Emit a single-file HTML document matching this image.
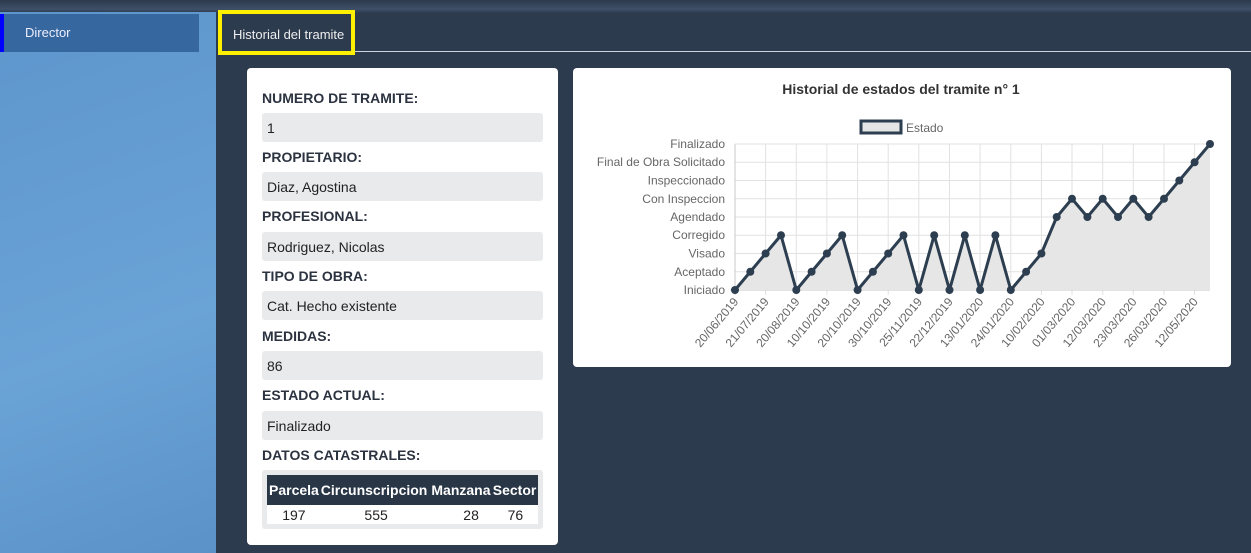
<!DOCTYPE html>
<html><head><meta charset="utf-8"><style>
*{margin:0;padding:0;box-sizing:border-box}
body{width:1251px;height:553px;overflow:hidden;background:#2d3b4e;font-family:"Liberation Sans",sans-serif;position:relative}
.top{position:absolute;left:0;top:0;width:1251px;height:13px;background:linear-gradient(#2b394b,#3e5068 70%,#2d3b4e)}
.side{position:absolute;left:0;top:12px;width:216px;height:541px;background:linear-gradient(160deg,#5d96cc,#6aa3d6 60%,#5b93c9)}
.dir{position:absolute;left:0;top:14px;width:199px;height:38px;background:#36689f;border-left:4px solid #0000ff;color:#eef;font-size:13px;padding:11px 0 0 21px}
.tab{position:absolute;left:218px;top:10px;width:137px;height:45px;border:4px solid #ffef00;color:#eee;font-size:13px;padding:13px 0 0 11px;background:#2d3b4e}
.tline{position:absolute;left:355px;top:51px;width:896px;height:1px;background:#cfd4da}
.card{position:absolute;background:#fff;border-radius:4px}
.lab{position:absolute;left:15px;font-weight:bold;font-size:14px;color:#2c3340}
.inp{position:absolute;left:15px;width:281px;height:29px;background:#e9eaec;border-radius:3px;font-size:14px;color:#222;padding:7px 0 0 5px}
table{border-collapse:collapse;font-size:14px}
</style></head><body>
<div class="top"></div>
<div class="side"></div>
<div class="dir">Director</div>
<div class="tab">Historial del tramite</div>
<div class="tline"></div>
<div class="card" style="left:247px;top:68px;width:311px;height:477px">
<div class="lab" style="top:22px">NUMERO DE TRAMITE:</div>
<div class="inp" style="top:45px">1</div>
<div class="lab" style="top:81px">PROPIETARIO:</div>
<div class="inp" style="top:104px">Diaz, Agostina</div>
<div class="lab" style="top:140px">PROFESIONAL:</div>
<div class="inp" style="top:164px">Rodriguez, Nicolas</div>
<div class="lab" style="top:200px">TIPO DE OBRA:</div>
<div class="inp" style="top:223px">Cat. Hecho existente</div>
<div class="lab" style="top:260px">MEDIDAS:</div>
<div class="inp" style="top:283px">86</div>
<div class="lab" style="top:319px">ESTADO ACTUAL:</div>
<div class="inp" style="top:343px">Finalizado</div>
<div class="lab" style="top:379px">DATOS CATASTRALES:</div>
<div style="position:absolute;left:15px;top:402px;width:281px;height:59px;background:#e9eaec;border-radius:3px;padding:5px">
<table style="width:271px"><tr style="background:#293646;color:#fff;font-weight:bold;height:30px"><td style="padding-left:2px">Parcela</td><td>Circunscripcion</td><td>Manzana</td><td>Sector</td></tr>
<tr style="background:#fff;color:#222;height:19px;text-align:center"><td>197</td><td>555</td><td style="padding-left:18px">28</td><td>76</td></tr></table></div>
</div>
<div class="card" style="left:573px;top:68px;width:658px;height:299px"></div>
<svg style="position:absolute;left:0;top:0" width="1251" height="553" font-family="Liberation Sans,sans-serif">
<text x="901" y="94" text-anchor="middle" font-size="14" font-weight="bold" fill="#333">Historial de estados del tramite n° 1</text>
<rect x="861" y="121" width="40" height="12" fill="#e5e5e5" stroke="#2c3e50" stroke-width="3"/>
<text x="906" y="132" font-size="12" fill="#666">Estado</text>
<g stroke="#e2e2e2" stroke-width="1">
<line x1="735" y1="144" x2="1210" y2="144"/><line x1="735" y1="162.25" x2="1210" y2="162.25"/><line x1="735" y1="180.5" x2="1210" y2="180.5"/><line x1="735" y1="198.75" x2="1210" y2="198.75"/><line x1="735" y1="217" x2="1210" y2="217"/><line x1="735" y1="235.25" x2="1210" y2="235.25"/><line x1="735" y1="253.5" x2="1210" y2="253.5"/><line x1="735" y1="271.75" x2="1210" y2="271.75"/>
<line x1="765.6" y1="144" x2="765.6" y2="295"/><line x1="796.3" y1="144" x2="796.3" y2="295"/><line x1="826.9" y1="144" x2="826.9" y2="295"/><line x1="857.6" y1="144" x2="857.6" y2="295"/><line x1="888.2" y1="144" x2="888.2" y2="295"/><line x1="918.8" y1="144" x2="918.8" y2="295"/><line x1="949.5" y1="144" x2="949.5" y2="295"/><line x1="980.1" y1="144" x2="980.1" y2="295"/><line x1="1010.8" y1="144" x2="1010.8" y2="295"/><line x1="1041.4" y1="144" x2="1041.4" y2="295"/><line x1="1072" y1="144" x2="1072" y2="295"/><line x1="1102.7" y1="144" x2="1102.7" y2="295"/><line x1="1133.3" y1="144" x2="1133.3" y2="295"/><line x1="1164" y1="144" x2="1164" y2="295"/><line x1="1194.6" y1="144" x2="1194.6" y2="295"/>
</g>
<g stroke="#c8c8c8"><line x1="735" y1="144" x2="735" y2="295"/><line x1="730" y1="290" x2="1210" y2="290"/></g>
<polygon fill="#e6e6e6" points="735,290 750.3,271.75 765.6,253.5 781,235.25 796.3,290 811.6,271.75 826.9,253.5 842.2,235.25 857.6,290 872.9,271.75 888.2,253.5 903.5,235.25 918.8,290 934.2,235.25 949.5,290 964.8,235.25 980.1,290 995.4,235.25 1010.8,290 1026.1,271.75 1041.4,253.5 1056.7,217 1072,198.75 1087.4,217 1102.7,198.75 1118,217 1133.3,198.75 1148.6,217 1164,198.75 1179.3,180.5 1194.6,162.25 1210,144 1210,290"/>
<polyline fill="none" stroke="#2c3e50" stroke-width="3" stroke-linejoin="round" points="735,290 750.3,271.75 765.6,253.5 781,235.25 796.3,290 811.6,271.75 826.9,253.5 842.2,235.25 857.6,290 872.9,271.75 888.2,253.5 903.5,235.25 918.8,290 934.2,235.25 949.5,290 964.8,235.25 980.1,290 995.4,235.25 1010.8,290 1026.1,271.75 1041.4,253.5 1056.7,217 1072,198.75 1087.4,217 1102.7,198.75 1118,217 1133.3,198.75 1148.6,217 1164,198.75 1179.3,180.5 1194.6,162.25 1210,144"/>
<g fill="#2c3e50">
<circle cx="735" cy="290" r="4"/><circle cx="750.3" cy="271.75" r="4"/><circle cx="765.6" cy="253.5" r="4"/><circle cx="781" cy="235.25" r="4"/><circle cx="796.3" cy="290" r="4"/><circle cx="811.6" cy="271.75" r="4"/><circle cx="826.9" cy="253.5" r="4"/><circle cx="842.2" cy="235.25" r="4"/><circle cx="857.6" cy="290" r="4"/><circle cx="872.9" cy="271.75" r="4"/><circle cx="888.2" cy="253.5" r="4"/><circle cx="903.5" cy="235.25" r="4"/><circle cx="918.8" cy="290" r="4"/><circle cx="934.2" cy="235.25" r="4"/><circle cx="949.5" cy="290" r="4"/><circle cx="964.8" cy="235.25" r="4"/><circle cx="980.1" cy="290" r="4"/><circle cx="995.4" cy="235.25" r="4"/><circle cx="1010.8" cy="290" r="4"/><circle cx="1026.1" cy="271.75" r="4"/><circle cx="1041.4" cy="253.5" r="4"/><circle cx="1056.7" cy="217" r="4"/><circle cx="1072" cy="198.75" r="4"/><circle cx="1087.4" cy="217" r="4"/><circle cx="1102.7" cy="198.75" r="4"/><circle cx="1118" cy="217" r="4"/><circle cx="1133.3" cy="198.75" r="4"/><circle cx="1148.6" cy="217" r="4"/><circle cx="1164" cy="198.75" r="4"/><circle cx="1179.3" cy="180.5" r="4"/><circle cx="1194.6" cy="162.25" r="4"/><circle cx="1210" cy="144" r="4"/>
</g>
<g font-size="12" fill="#666" text-anchor="end">
<text x="725" y="148">Finalizado</text><text x="725" y="166">Final de Obra Solicitado</text><text x="725" y="184.5">Inspeccionado</text><text x="725" y="203">Con Inspeccion</text><text x="725" y="221">Agendado</text><text x="725" y="239">Corregido</text><text x="725" y="257.5">Visado</text><text x="725" y="276">Aceptado</text><text x="725" y="294">Iniciado</text>
</g>
<g font-size="12" fill="#666" text-anchor="end">
<text transform="translate(739,302) rotate(-50)">20/06/2019</text>
<text transform="translate(769.6,302) rotate(-50)">21/07/2019</text>
<text transform="translate(800.3,302) rotate(-50)">20/08/2019</text>
<text transform="translate(830.9,302) rotate(-50)">10/10/2019</text>
<text transform="translate(861.6,302) rotate(-50)">20/10/2019</text>
<text transform="translate(892.2,302) rotate(-50)">30/10/2019</text>
<text transform="translate(922.8,302) rotate(-50)">25/11/2019</text>
<text transform="translate(953.5,302) rotate(-50)">22/12/2019</text>
<text transform="translate(984.1,302) rotate(-50)">13/01/2020</text>
<text transform="translate(1014.8,302) rotate(-50)">24/01/2020</text>
<text transform="translate(1045.4,302) rotate(-50)">10/02/2020</text>
<text transform="translate(1076,302) rotate(-50)">01/03/2020</text>
<text transform="translate(1106.7,302) rotate(-50)">12/03/2020</text>
<text transform="translate(1137.3,302) rotate(-50)">23/03/2020</text>
<text transform="translate(1168,302) rotate(-50)">26/03/2020</text>
<text transform="translate(1198.6,302) rotate(-50)">12/05/2020</text>
</g>
</svg>
</body></html>
